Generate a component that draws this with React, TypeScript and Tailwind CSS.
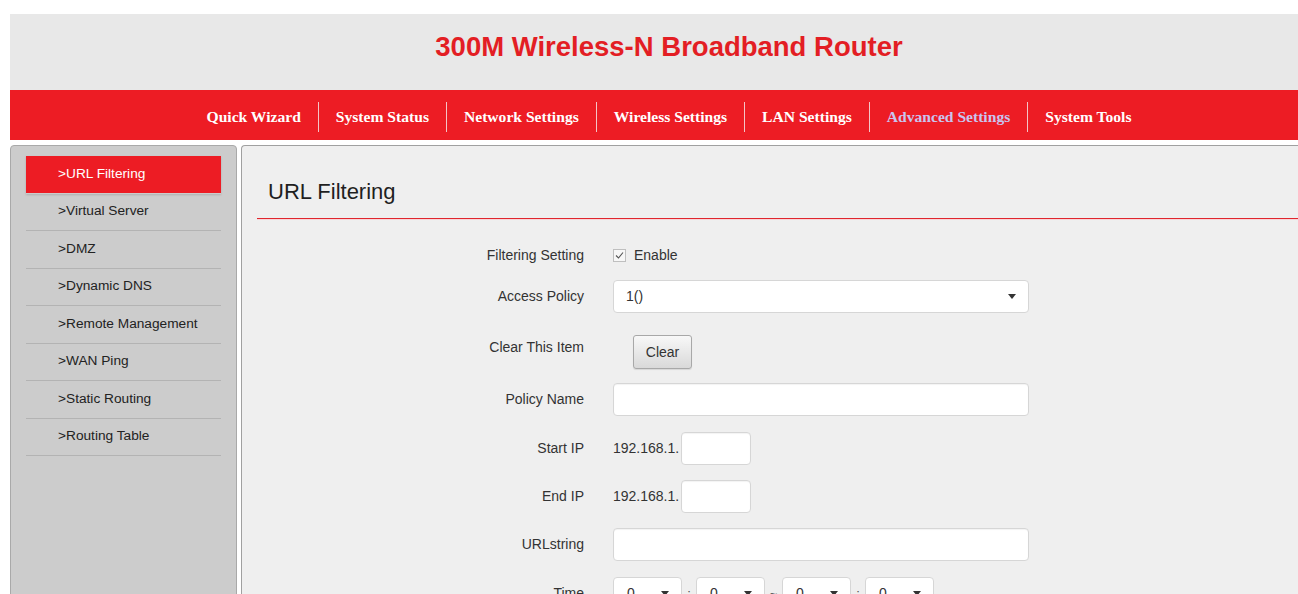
import React from "react"

const navItems = [
  "Quick Wizard",
  "System Status",
  "Network Settings",
  "Wireless Settings",
  "LAN Settings",
  "Advanced Settings",
  "System Tools",
]

const sideItems = [
  "URL Filtering",
  "Virtual Server",
  "DMZ",
  "Dynamic DNS",
  "Remote Management",
  "WAN Ping",
  "Static Routing",
  "Routing Table",
]

function Caret() {
  return (
    <svg width="8" height="5" viewBox="0 0 8 5" className="shrink-0">
      <path d="M0 0 L8 0 L4 5 Z" fill="#333" />
    </svg>
  )
}

function Field({ className = "" }: { className?: string }) {
  return (
    <div
      className={`h-[33px] bg-white border border-[#d6d6d6] rounded-[4px] shadow-[inset_0_1px_1px_rgba(0,0,0,0.05)] ${className}`}
    />
  )
}

function Row({
  label,
  children,
  className = "",
  labelClass = "",
}: {
  label: string
  children: React.ReactNode
  className?: string
  labelClass?: string
}) {
  return (
    <div className={`flex items-center ${className}`}>
      <div className={`w-[327px] text-right text-[14px] text-[#333] ${labelClass}`}>{label}</div>
      <div className="ml-[29px] flex items-center">{children}</div>
    </div>
  )
}

function TimeSelect() {
  return (
    <div className="w-[69px] h-[33px] bg-white border border-[#d6d6d6] rounded-[4px] flex items-center justify-between pl-[13px] pr-[12px] text-[14px] text-[#333]">
      <span>0</span>
      <Caret />
    </div>
  )
}

export default function App() {
  return (
    <div
      className="h-[594px] overflow-hidden bg-white"
      style={{ fontFamily: '"Liberation Sans", Arial, sans-serif' }}
    >
      {/* Header */}
      <div className="ml-[10px] mt-[14px]">
        <div className="h-[76px] bg-[#e8e8e8] pl-[30px] flex justify-center pt-[17px]">
          <h1 className="text-[27.5px] leading-[32px] font-bold text-[#e31e24]">
            300M Wireless-N Broadband Router
          </h1>
        </div>
        <nav
          className="h-[50px] bg-[#ed1c24] pl-[30px] pt-[3px] flex items-center justify-center"
          style={{ fontFamily: '"Liberation Serif", "Times New Roman", serif' }}
        >
          {navItems.map((item, i) => (
            <div key={item} className="flex items-center">
              {i > 0 && <div className="w-px h-[30px] bg-[#f4c4c6]" />}
              <span
                className={`px-[17px] text-[15.6px] font-bold ${
                  item === "Advanced Settings" ? "text-[#c9c4ee]" : "text-white"
                }`}
              >
                {item}
              </span>
            </div>
          ))}
        </nav>
      </div>

      <div className="flex mt-[5px] ml-[10px] gap-[4px]">
        {/* Side menu */}
        <aside className="w-[227px] h-[460px] shrink-0 bg-[#cccccc] border border-[#a9a9a9] rounded-t-[4px] pt-[10px] pl-[15px] pr-[15px]">
          {sideItems.map((item, i) => (
            <div
              key={item}
              className={`h-[37.5px] flex items-center pl-[32px] text-[13.7px] ${
                i === 0
                  ? "bg-[#ed1c24] text-white border-b border-[#cccccc] shadow-[0_1px_2px_rgba(0,0,0,0.15)]"
                  : "text-[#222] border-b border-[#b3b3b3]"
              }`}
            >
              &gt;{item}
            </div>
          ))}
        </aside>

        {/* Main panel */}
        <main className="flex-1 h-[460px] bg-[#efefef] border-t border-l border-[#a0a0a0] rounded-tl-[4px]">
          <div className="ml-[15px] pt-[32px] pb-[12px] border-b border-[#e0262e] shadow-[0_1px_0_#f7d6d8]">
            <h2 className="pl-[11px] text-[22px] leading-[28px] text-[#1f1f1f]">URL Filtering</h2>
          </div>

          <div className="pt-[26px] pl-[15px]">
            <Row label="Filtering Setting" className="h-[20px]">
              <svg width="13" height="13" viewBox="0 0 13 13">
                <rect x="0.5" y="0.5" width="12" height="12" fill="#f7f7f7" stroke="#8a8a8a" strokeDasharray="1 1" />
                <path d="M3 6.5 L5.5 9 L10 3.5" fill="none" stroke="#555" strokeWidth="1.1" />
              </svg>
              <span className="ml-[8px] text-[14px] text-[#333]">Enable</span>
            </Row>

            <Row label="Access Policy" className="mt-[15px]">
              <div className="w-[416px] h-[33px] bg-white border border-[#d6d6d6] rounded-[4px] flex items-center justify-between pl-[12px] pr-[12px] text-[14px] text-[#333]">
                <span>1()</span>
                <Caret />
              </div>
            </Row>

            <Row label="Clear This Item" className="mt-[22px] !items-start" labelClass="pt-[2px]">
              <button className="ml-[20px] w-[59px] h-[34px] rounded-[3px] border border-[#a8a8a8] bg-gradient-to-b from-[#f8f8f8] to-[#d9d9d9] text-[14px] text-[#333] shadow-[0_1px_1px_rgba(0,0,0,0.1)]">
                Clear
              </button>
            </Row>

            <Row label="Policy Name" className="mt-[14px]">
              <Field className="w-[416px]" />
            </Row>

            <Row label="Start IP" className="mt-[16px]">
              <span className="text-[14px] text-[#333]">192.168.1.</span>
              <Field className="ml-[2px] w-[70px]" />
            </Row>

            <Row label="End IP" className="mt-[15px]">
              <span className="text-[14px] text-[#333]">192.168.1.</span>
              <Field className="ml-[2px] w-[70px]" />
            </Row>

            <Row label="URLstring" className="mt-[15px]">
              <Field className="w-[416px]" />
            </Row>

            <Row label="Time" className="mt-[16px]">
              <TimeSelect />
              <span className="w-[14px] text-center text-[13px] text-[#555]">:</span>
              <TimeSelect />
              <span className="w-[17px] text-center text-[13px] text-[#555]">~</span>
              <TimeSelect />
              <span className="w-[14px] text-center text-[13px] text-[#555]">:</span>
              <TimeSelect />
            </Row>
          </div>
        </main>
      </div>
    </div>
  )
}
